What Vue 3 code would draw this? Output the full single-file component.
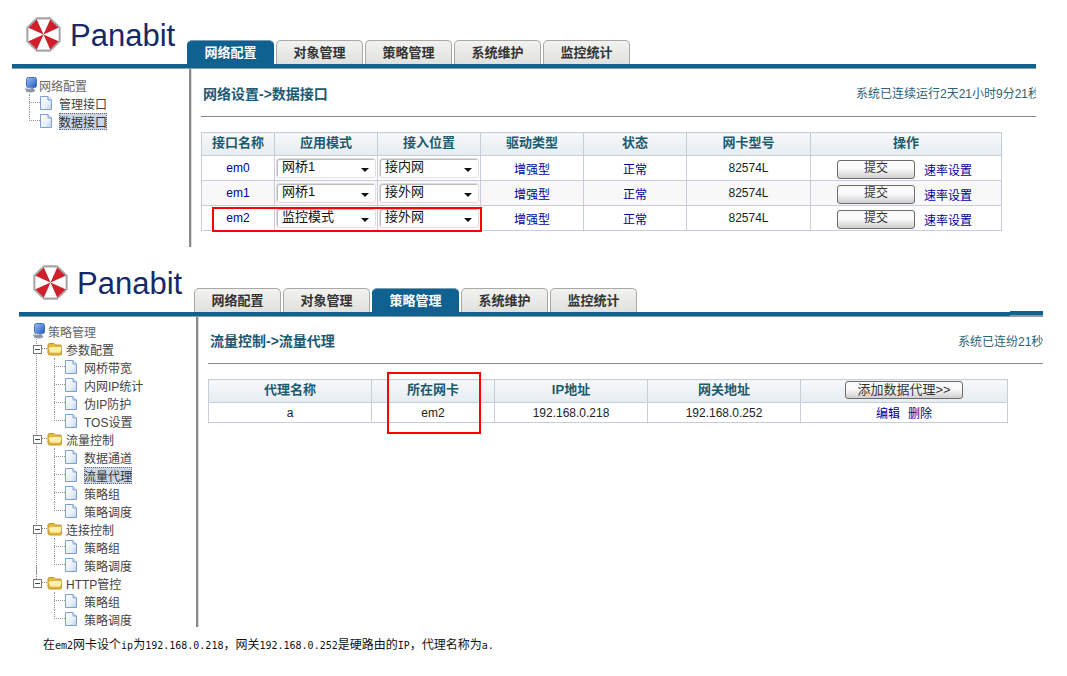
<script setup>
const tabs = ['网络配置', '对象管理', '策略管理', '系统维护', '监控统计']
const rows1 = [
  { name: 'em0', mode: '网桥1', pos: '接内网' },
  { name: 'em1', mode: '网桥1', pos: '接外网' },
  { name: 'em2', mode: '监控模式', pos: '接外网' }
]
const groups = [
  { name: '参数配置', leaves: ['网桥带宽', '内网IP统计', '伪IP防护', 'TOS设置'] },
  { name: '流量控制', leaves: ['数据通道', '流量代理', '策略组', '策略调度'] },
  { name: '连接控制', leaves: ['策略组', '策略调度'] },
  { name: 'HTTP管控', leaves: ['策略组', '策略调度'] }
]
</script>

<template>
  <div class="page">
    <svg class="defs" width="0" height="0">
      <defs>
        <linearGradient id="docfill" x1="0" y1="0" x2="1" y2="1">
          <stop offset="0" stop-color="#ffffff" />
          <stop offset="0.6" stop-color="#e8f0fb" />
          <stop offset="1" stop-color="#b9cff0" />
        </linearGradient>
        <linearGradient id="screen" x1="0" y1="0" x2="1" y2="1">
          <stop offset="0" stop-color="#9cc4f4" />
          <stop offset="1" stop-color="#1f58c8" />
        </linearGradient>
      </defs>
    </svg>

    <!-- 第一块：网络配置 -->
    <section class="panel first">
      <header class="head">
        <div class="logo">
          <svg class="mark" viewBox="0 0 36 36" width="37" height="37">
            <polygon points="24.5,2.3 33.7,11.5 33.7,24.5 24.5,33.7 11.5,33.7 2.3,24.5 2.3,11.5 11.5,2.3" fill="#fff" stroke="#a6a6a6" stroke-width="2" stroke-linejoin="round" />
            <polygon points="18,18 24.5,3.4 32.6,11.5" fill="#cf1f2b" />
            <polygon points="18,18 32.6,24.5 24.5,32.6" fill="#cf1f2b" />
            <polygon points="18,18 11.5,32.6 3.4,24.5" fill="#cf1f2b" />
            <polygon points="18,18 3.4,11.5 11.5,3.4" fill="#cf1f2b" />
          </svg>
          <span class="brand">Panabit</span>
        </div>
        <nav class="tabs">
          <span v-for="(t, i) in tabs" :key="t" class="tab" :class="{ on: i === 0 }">{{ t }}</span>
        </nav>
      </header>
      <div class="bar"></div>
      <div class="body">
        <aside class="side">
          <div class="tree flat">
            <div class="row root">
              <svg class="pc" viewBox="0 0 14 16" width="14" height="16">
                <rect x="2.5" y="0.5" width="10" height="10" rx="2" fill="url(#screen)" stroke="#4a6fb0" />
                <path d="M1 11 L9 10.5 L11.5 14 L8 15.5 L2.5 15 Z" fill="#8d97ac" />
                <path d="M2 11.5 L7 11.2" stroke="#d8dee8" />
              </svg>
              <span>网络配置</span>
            </div>
            <div class="row leaf">
              <svg class="doc" viewBox="0 0 12 14" width="12" height="14"><path d="M0.5 0.5H8L11.5 4V13.5H0.5Z" fill="url(#docfill)" stroke="#7f9fd0" /><path d="M8 0.5V4H11.5" fill="#d8e6f8" stroke="#7f9fd0" /></svg>
              <span>管理接口</span>
            </div>
            <div class="row leaf last">
              <svg class="doc" viewBox="0 0 12 14" width="12" height="14"><path d="M0.5 0.5H8L11.5 4V13.5H0.5Z" fill="url(#docfill)" stroke="#7f9fd0" /><path d="M8 0.5V4H11.5" fill="#d8e6f8" stroke="#7f9fd0" /></svg>
              <span class="picked">数据接口</span>
            </div>
          </div>
        </aside>
        <main class="main">
          <div class="title-row">
            <h2 class="title w1">网络设置->数据接口</h2>
            <span class="uptime">系统已连续运行2天21小时9分21秒</span>
          </div>
          <div class="table-wrap">
            <table class="grid t1">
              <colgroup>
                <col class="c73" /><col class="c103" /><col class="c103" /><col class="c103" /><col class="c103" /><col class="c124" /><col class="c191" />
              </colgroup>
              <thead>
                <tr><th>接口名称</th><th>应用模式</th><th>接入位置</th><th>驱动类型</th><th>状态</th><th>网卡型号</th><th>操作</th></tr>
              </thead>
              <tbody>
                <tr v-for="r in rows1" :key="r.name">
                  <td class="link">{{ r.name }}</td>
                  <td class="fit"><div class="select"><span>{{ r.mode }}</span><i class="arrow"></i></div></td>
                  <td class="fit"><div class="select"><span>{{ r.pos }}</span><i class="arrow"></i></div></td>
                  <td class="link">增强型</td>
                  <td class="link">正常</td>
                  <td>82574L</td>
                  <td class="ops">
                    <span class="btn submit">提交</span>
                    <span class="link rate">速率设置</span>
                  </td>
                </tr>
              </tbody>
            </table>
            <div class="mark-a"></div>
          </div>
        </main>
      </div>
    </section>

    <!-- 第二块：策略管理 -->
    <section class="panel second">
      <header class="head">
        <div class="logo">
          <svg class="mark" viewBox="0 0 36 36" width="37" height="37">
            <polygon points="24.5,2.3 33.7,11.5 33.7,24.5 24.5,33.7 11.5,33.7 2.3,24.5 2.3,11.5 11.5,2.3" fill="#fff" stroke="#a6a6a6" stroke-width="2" stroke-linejoin="round" />
            <polygon points="18,18 24.5,3.4 32.6,11.5" fill="#cf1f2b" />
            <polygon points="18,18 32.6,24.5 24.5,32.6" fill="#cf1f2b" />
            <polygon points="18,18 11.5,32.6 3.4,24.5" fill="#cf1f2b" />
            <polygon points="18,18 3.4,11.5 11.5,3.4" fill="#cf1f2b" />
          </svg>
          <span class="brand">Panabit</span>
        </div>
        <nav class="tabs">
          <span v-for="(t, i) in tabs" :key="t" class="tab" :class="{ on: i === 2 }">{{ t }}</span>
        </nav>
      </header>
      <div class="bar seam"></div>
      <div class="body">
        <aside class="side">
          <div class="tree">
            <div class="row root">
              <svg class="pc" viewBox="0 0 14 16" width="14" height="16">
                <rect x="2.5" y="0.5" width="10" height="10" rx="2" fill="url(#screen)" stroke="#4a6fb0" />
                <path d="M1 11 L9 10.5 L11.5 14 L8 15.5 L2.5 15 Z" fill="#8d97ac" />
                <path d="M2 11.5 L7 11.2" stroke="#d8dee8" />
              </svg>
              <span>策略管理</span>
            </div>
            <div v-for="(g, gi) in groups" :key="g.name" class="group" :class="{ endgroup: gi === groups.length - 1 }">
              <div class="row branch">
                <span class="box"></span>
                <svg class="folder" viewBox="0 0 16 14" width="16" height="14">
                  <path d="M1 3 Q1 1.5 3 1.5 H7 L8.5 3 H13 Q14.5 3 14.5 4.5 V12 Q14.5 13 13 13 H3 Q1 13 1 11 Z" fill="#e7b93c" stroke="#c09428" />
                  <path d="M1.2 6 Q2.5 4.5 5 4.5 H14.5 V8 Q14 11 12 11 H3 Z" fill="#fdf0ae" stroke="#d4aa38" stroke-width="0.7" />
                </svg>
                <span>{{ g.name }}</span>
              </div>
              <div v-for="(l, li) in g.leaves" :key="l" class="row leaf" :class="{ last: li === g.leaves.length - 1 }">
                <svg class="doc" viewBox="0 0 12 14" width="12" height="14"><path d="M0.5 0.5H8L11.5 4V13.5H0.5Z" fill="url(#docfill)" stroke="#7f9fd0" /><path d="M8 0.5V4H11.5" fill="#d8e6f8" stroke="#7f9fd0" /></svg>
                <span :class="{ picked: l === '流量代理' }">{{ l }}</span>
              </div>
            </div>
          </div>
        </aside>
        <main class="main">
          <div class="title-row short">
            <h2 class="title w2">流量控制->流量代理</h2>
            <span class="uptime">系统已连纷21秒</span>
          </div>
          <div class="table-wrap">
            <table class="grid t2">
              <colgroup>
                <col class="c163" /><col class="c123" /><col class="c153" /><col class="c153" /><col class="c207" />
              </colgroup>
              <thead>
                <tr><th>代理名称</th><th>所在网卡</th><th>IP地址</th><th>网关地址</th><th><span class="btn add">添加数据代理&gt;&gt;</span></th></tr>
              </thead>
              <tbody>
                <tr>
                  <td>a</td>
                  <td>em2</td>
                  <td>192.168.0.218</td>
                  <td>192.168.0.252</td>
                  <td class="link"><span class="edit">编辑</span><span>删除</span></td>
                </tr>
              </tbody>
            </table>
            <div class="mark-b"></div>
          </div>
        </main>
      </div>
    </section>

    <p class="note">在<span class="lat">em2</span>网卡设个<span class="lat">ip</span>为<span class="lat">192.168.0.218</span>，网关<span class="lat">192.168.0.252</span>是硬路由的<span class="lat">IP</span>，代理名称为<span class="lat">a.</span></p>
  </div>
</template>

<style>
html, body { background: #fff; }
</style>

<style scoped>
.page {
  width: 1067px;
  height: 676px;
  overflow: hidden;
  background: #fff;
  font-family: "Liberation Sans", "Noto Sans CJK SC", sans-serif;
  font-size: 12px;
  color: #222;
}
.defs { position: absolute; }
.panel { width: 1024px; overflow: hidden; }
.panel.first { margin-left: 12px; height: 248px; }
.panel.second { margin-left: 19px; height: 379px; }

.head { display: flex; height: 64px; }
.logo {
  width: 175px;
  flex: none;
  display: flex;
  align-items: center;
  gap: 8px;
  padding: 16px 0 11px 13px;
  box-sizing: border-box;
}
.mark { flex: none; }
.brand { font-size: 31px; color: #15296a; line-height: 35px; position: relative; top: 1px; }

.tabs { display: flex; align-items: flex-end; gap: 2px; }
.tab {
  width: 87px;
  height: 24px;
  box-sizing: border-box;
  border: 1px solid #a8a8a4;
  border-bottom: 0;
  border-radius: 5px 5px 0 0;
  background: linear-gradient(#f2f2f0, #e0e0dc);
  color: #333;
  font-weight: 700;
  font-size: 13px;
  line-height: 24px;
  text-align: center;
}
.tab.on {
  background: #0f6190;
  border-color: #0f6190;
  border-top-color: #7f9db0;
  color: #fff;
}
.bar { height: 4px; background: #0f6190; border-bottom: 1px solid #8d9aa2; position: relative; }
.seam::after {
  content: "";
  position: absolute;
  right: 0;
  top: -1px;
  width: 33px;
  height: 4px;
  background: #0f6190;
  border-bottom: 1px solid #8d9aa2;
}

.body { display: flex; height: 178px; }
.second .body { height: 310px; }
.side { width: 177px; flex: none; border-right: 2px solid #8a8a8a; }
.main { flex: 1; min-width: 0; padding-left: 10px; box-shadow: inset 1px 0 0 #dcdcdc; }

.tree { padding: 5px 0 0 13px; color: #444; position: relative; }
.flat.tree { padding-top: 7px; }
.row {
  height: 18px;
  display: flex;
  align-items: center;
  position: relative;
  white-space: nowrap;
}
.root { gap: 2px; color: #666; }
.flat .root { gap: 1px; }
.pc { flex: none; }
.flat .pc { margin-left: -1px; }

.branch { padding-left: 1px; }
.box {
  width: 9px;
  height: 9px;
  box-sizing: border-box;
  border: 1px solid #777;
  background: linear-gradient(to bottom, transparent 3px, #444 3px, #444 4px, transparent 4px) 1px 0 / 5px 100% no-repeat #fff;
  margin-right: 5px;
  flex: none;
  position: relative;
  z-index: 1;
}
.folder { flex: none; margin-right: 3px; }
.branch::after {
  content: "";
  position: absolute;
  left: 10px;
  width: 5px;
  top: 8px;
  border-top: 1px dotted #888;
}

.group { position: relative; }
.group::before {
  content: "";
  position: absolute;
  left: 4px;
  top: -9px;
  bottom: 0;
  border-left: 1px dotted #999;
}
.group.endgroup::before { bottom: auto; height: 18px; }

.leaf { padding-left: 33px; }
.doc { flex: none; margin-right: 7px; }
.leaf::before {
  content: "";
  position: absolute;
  left: 22px;
  top: 0;
  bottom: 0;
  border-left: 1px dotted #999;
}
.leaf.last::before { bottom: 9px; }
.leaf::after {
  content: "";
  position: absolute;
  left: 22px;
  width: 11px;
  top: 8px;
  border-top: 1px dotted #999;
}
.flat .leaf { padding-left: 15px; }
.flat .leaf::before { left: 4px; }
.flat .leaf::after { left: 4px; }
.picked {
  background: #c9d6e8;
  outline: 1px dotted #667;
  outline-offset: -1px;
  color: #333;
}

.title-row {
  display: flex;
  align-items: center;
  box-sizing: border-box;
  border-bottom: 1px solid #888;
  height: 48px;
  white-space: nowrap;
}
.title-row.short { height: 47px; }
.title {
  margin: 0;
  flex: none;
  font-size: 14px;
  font-weight: 700;
  color: #1c5a72;
  padding-left: 2px;
  box-sizing: border-box;
}
.title.w1 { width: 655px; }
.title.w2 { width: 750px; }
.uptime { flex: none; color: #2f6272; font-size: 12px; }

.table-wrap { position: relative; margin-top: 15px; }
.grid {
  border-collapse: collapse;
  table-layout: fixed;
  border: 1px solid #c6ced9;
  font-size: 12px;
}
.t1 { width: 800px; }
.t2 { width: 799px; }
.c73 { width: 73px; }
.c103 { width: 103px; }
.c124 { width: 124px; }
.c191 { width: 191px; }
.c163 { width: 163px; }
.c123 { width: 123px; }
.c153 { width: 153px; }
.c207 { width: 207px; }
.grid th, .grid td {
  border: 1px solid #c6ced9;
  padding: 0;
  text-align: center;
  white-space: nowrap;
}
.grid th {
  height: 20px;
  padding-bottom: 2px;
  line-height: 18px;
  font-size: 13px;
  font-weight: 700;
  color: #1d5a6e;
  background: linear-gradient(#f7f9fa, #e6ecf1);
}
.t1 td { height: 24px; color: #222; }
.t1 tbody tr:nth-child(even) td { background: #f8f8f8; }
.t2 td { height: 19px; color: #222; }
.grid td.link, .link { color: #00009a; }
.edit { margin-right: 8px; }

.fit { padding: 0 1px; }
.select {
  display: flex;
  align-items: center;
  justify-content: space-between;
  height: 20px;
  margin: 0 1px;
  padding: 0 6px 0 5px;
  border: 1px solid #dfdfdf;
  border-radius: 3px;
  box-shadow: inset 1px 1px 0 #bbb;
  background: #fff;
  color: #111;
  font-size: 13px;
  line-height: 16px;
  box-sizing: border-box;
}
.select span { position: relative; top: -1px; }
.arrow {
  width: 0;
  height: 0;
  border-left: 4px solid transparent;
  border-right: 4px solid transparent;
  border-top: 4px solid #111;
  margin-top: 3px;
}

.btn {
  display: inline-block;
  box-sizing: border-box;
  border: 1px solid #6d6d6d;
  border-radius: 3px;
  background: linear-gradient(#fafafa 45%, #cfcfcf);
  color: #333;
  font-weight: 400;
  text-align: center;
}
.submit { width: 78px; height: 19px; line-height: 15px; }
.add { width: 118px; height: 18px; line-height: 16px; font-size: 13px; }
.grid td.ops { text-align: left; padding-left: 26px; }
.rate { margin-left: 9px; position: relative; top: 3px; }

.mark-a {
  position: absolute;
  left: 11px;
  top: 75px;
  width: 270px;
  height: 25px;
  border: 2px solid #f00;
  box-sizing: border-box;
}
.mark-b {
  position: absolute;
  left: 179px;
  top: -7px;
  width: 94px;
  height: 62px;
  border: 2px solid #f00;
  box-sizing: border-box;
}

.note {
  margin: 9px 0 0 43px;
  font-family: "DejaVu Sans Mono", "Noto Sans CJK SC", monospace;
  font-size: 12px;
  line-height: 18px;
  color: #111;
  white-space: nowrap;
}
.lat { font-size: 10px; }
</style>
